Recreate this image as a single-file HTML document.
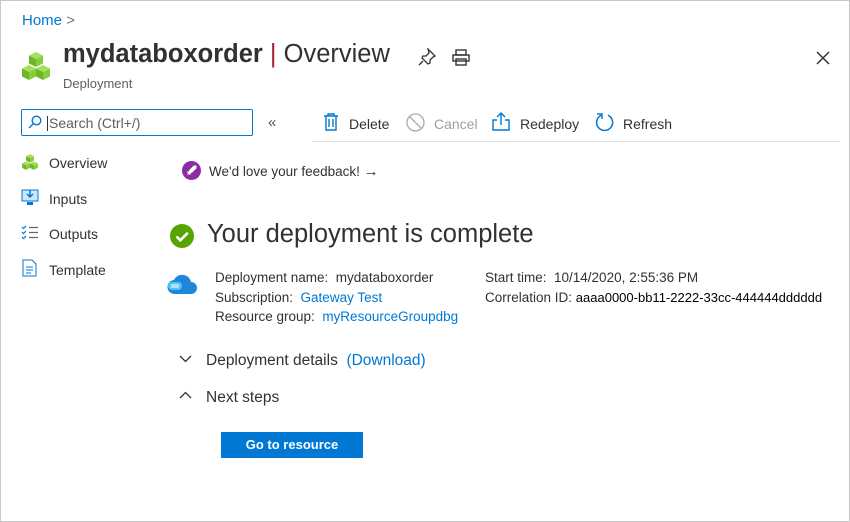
<!DOCTYPE html>
<html><head><style>
body{margin:0;width:850px;height:522px;overflow:hidden;font-family:"Liberation Sans",sans-serif;color:#323130;background:#fff}
.frame{position:absolute;left:0;top:0;width:848px;height:520px;border:1px solid #c8c8c8}
.a{position:absolute;white-space:nowrap}
.blue{color:#0078d4}
.s14{font-size:14px}
</style></head><body>
<div class="frame"></div>
<div class="a blue" style="left:22px;top:12px;font-size:15px">Home <span style="color:#777">&gt;</span></div>
<svg class="a" style="left:20px;top:50px" width="32" height="32" viewBox="0 0 32 32">
<g id="c"><polygon points="16,2 23,5.5 16,9 9,5.5" fill="#a6e05a"/><polygon points="9,5.5 16,9 16,17 9,13.5" fill="#6fb52c"/><polygon points="23,5.5 16,9 16,17 23,13.5" fill="#86cc3c"/></g>
<use href="#c" x="-7" y="13"/><use href="#c" x="7" y="13"/></svg>
<div class="a" style="left:63px;top:40px;font-size:25.5px"><b>mydataboxorder</b> <span style="color:#a4262c">|</span> Overview</div>
<svg class="a" style="left:418px;top:48px" width="18" height="18" viewBox="0 0 18 18" fill="none" stroke="#333" stroke-width="1.3"><path d="M10 1l7 7-2 1-3 3 0 3-2 1-6-6 1-2 3 0 3-3zM5 13l-4 4"/></svg>
<svg class="a" style="left:452px;top:49px" width="18" height="17" viewBox="0 0 18 17" fill="none" stroke="#333" stroke-width="1.4"><rect x="4" y="1" width="10" height="5"/><rect x="1" y="6" width="16" height="6"/><rect x="4" y="10" width="10" height="6"/></svg>
<svg class="a" style="left:816px;top:51px" width="14" height="14" viewBox="0 0 14 14" stroke="#333" stroke-width="1.5"><path d="M1 1l12 12M13 1L1 13"/></svg>
<div class="a" style="left:63px;top:76px;font-size:13px;color:#605e5c">Deployment</div>
<div class="a" style="left:21px;top:109px;width:230px;height:25px;border:1px solid #0078d4;border-radius:2px"></div>
<svg class="a" style="left:28px;top:115px" width="14" height="14" viewBox="0 0 14 14" fill="none" stroke="#0078d4" stroke-width="1.4"><circle cx="8.5" cy="5.5" r="4.3"/><path d="M5.5 8.5 1 13"/></svg>
<div class="a" style="left:47px;top:116px;width:1px;height:15px;background:#333"></div>
<div class="a s14" style="left:49px;top:115px;color:#605e5c">Search (Ctrl+/)</div>
<div class="a" style="left:268px;top:114px;font-size:15px;color:#555">«</div>
<div class="a" style="left:312px;top:141px;width:528px;height:1px;background:#e1dfdd"></div>
<svg class="a" style="left:323px;top:113px" width="16" height="18" viewBox="0 0 16 18" fill="none" stroke="#0078d4" stroke-width="1.4"><path d="M1 3h14M5 3V1h6v2M3 3v14h10V3M6 6v8M10 6v8"/></svg>
<div class="a s14" style="left:349px;top:116px">Delete</div>
<svg class="a" style="left:406px;top:113px" width="19" height="19" viewBox="0 0 19 19" fill="none" stroke="#aaa" stroke-width="1.3"><circle cx="9.5" cy="9.5" r="8.5"/><path d="M3.5 3.5l12 12"/></svg>
<div class="a s14" style="left:434px;top:116px;color:#a19f9d">Cancel</div>
<svg class="a" style="left:492px;top:112px" width="18" height="19" viewBox="0 0 18 19" fill="none" stroke="#0078d4" stroke-width="1.4"><path d="M5 8H1v10h16V8h-4M9 13V1M5 5l4-4 4 4"/></svg>
<div class="a s14" style="left:520px;top:116px">Redeploy</div>
<svg class="a" style="left:595px;top:112px" width="20" height="20" viewBox="0 0 20 20" fill="none" stroke="#0078d4" stroke-width="1.5"><path d="M13 3.2A8 8 0 1 1 6 3.3M2 2h5v5"/></svg>
<div class="a s14" style="left:623px;top:116px">Refresh</div>
<svg class="a" style="left:21px;top:153px" width="18" height="18" viewBox="0 0 32 32"><use href="#c"/><use href="#c" x="-7" y="13"/><use href="#c" x="7" y="13"/></svg>
<div class="a s14" style="left:49px;top:155px">Overview</div>
<svg class="a" style="left:21px;top:188px" width="18" height="18" viewBox="0 0 18 18"><rect x="1" y="2" width="16" height="11" fill="#cfe6fa" stroke="#0078d4"/><path d="M9 2v7M6 6l3 3 3-3" stroke="#0078d4" fill="none" stroke-width="1.5"/><rect x="6" y="14" width="6" height="3" fill="#0078d4"/></svg>
<div class="a s14" style="left:49px;top:191px">Inputs</div>
<svg class="a" style="left:21px;top:225px" width="18" height="15" viewBox="0 0 18 15" fill="none" stroke-width="1.2"><path d="M1 2l1.5 1.5L5 1M1 7l1.5 1.5L5 6M1 12l1.5 1.5L5 11" stroke="#0078d4"/><path d="M8 2.5h9M8 7.5h9M8 12.5h9" stroke="#666"/></svg>
<div class="a s14" style="left:49px;top:226px">Outputs</div>
<svg class="a" style="left:22px;top:259px" width="15" height="18" viewBox="0 0 15 18"><path d="M1 1h9l4 4v12H1z" fill="#fff" stroke="#0078d4"/><path d="M4 8h7M4 11h7M4 14h5" stroke="#0078d4"/></svg>
<div class="a s14" style="left:49px;top:262px">Template</div>
<svg class="a" style="left:182px;top:161px" width="19" height="19" viewBox="0 0 19 19"><circle cx="9.5" cy="9.5" r="9.5" fill="#8a2da5"/><path d="M6 13l2-4 4-4 2 0 0 2-4 4z M5 11l2 0M8 14l0-2" fill="#fff" stroke="#fff" stroke-width="1"/></svg>
<div class="a" style="left:209px;top:163px;font-size:13.5px">We'd love your feedback! <span style="font-size:15px">→</span></div>
<svg class="a" style="left:170px;top:224px" width="24" height="24" viewBox="0 0 24 24"><circle cx="12" cy="12" r="12" fill="#57a300"/><path d="M6.5 12.5l3.8 3.8 7.5-7.5" stroke="#fff" stroke-width="2.6" fill="none"/></svg>
<div class="a" style="left:207px;top:220px;font-size:25.5px">Your deployment is complete</div>
<svg class="a" style="left:167px;top:273px" width="31" height="22" viewBox="0 0 31 22"><path d="M8 21a7 7 0 0 1-1-14 9 9 0 0 1 17 2 6 6 0 0 1 0 12z" fill="#1f86dc"/><rect x="1" y="9" width="14" height="8" rx="4" fill="#50c6f0"/><path d="M4 12h8M4 14h8" stroke="#fff"/></svg>
<div class="a" style="left:215px;top:268px;font-size:13.5px;line-height:19.5px">Deployment name:&nbsp; mydataboxorder<br>Subscription:&nbsp; <span class="blue">Gateway Test</span><br>Resource group:&nbsp; <span class="blue">myResourceGroupdbg</span></div>
<div class="a" style="left:485px;top:268px;font-size:13.5px;line-height:19.5px">Start time:&nbsp; 10/14/2020, 2:55:36 PM<br>Correlation ID: <span style="color:#000;font-size:13px">aaaa0000-bb11-2222-33cc-444444dddddd</span></div>
<svg class="a" style="left:179px;top:355px" width="13" height="8" viewBox="0 0 13 8" fill="none" stroke="#333" stroke-width="1.3"><path d="M1 1l5.5 5.5L12 1"/></svg>
<div class="a" style="left:206px;top:352px;font-size:15.5px">Deployment details&nbsp; <span class="blue">(Download)</span></div>
<svg class="a" style="left:179px;top:391px" width="13" height="8" viewBox="0 0 13 8" fill="none" stroke="#333" stroke-width="1.3"><path d="M1 7l5.5-5.5L12 7"/></svg>
<div class="a" style="left:206px;top:389px;font-size:15.5px">Next steps</div>
<div class="a" style="left:221px;top:432px;width:142px;height:26px;background:#0078d4;color:#fff;font-size:13px;font-weight:bold;text-align:center;line-height:26px">Go to resource</div>
</body></html>
